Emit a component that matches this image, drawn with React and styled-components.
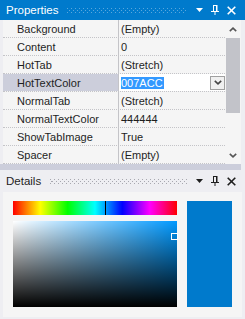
import React from 'react';
import styled, { createGlobalStyle } from 'styled-components';

const GlobalStyle = createGlobalStyle`
  html, body {
    margin: 0;
    padding: 0;
    background: #eeeef2;
  }
  body {
    font-family: "Liberation Sans", Arial, sans-serif;
    font-size: 11px;
    color: #1e1e1e;
  }
`;

const properties = [
  { name: 'Background', value: '(Empty)' },
  { name: 'Content', value: '0' },
  { name: 'HotTab', value: '(Stretch)' },
  { name: 'HotTextColor', value: '007ACC', editing: true },
  { name: 'NormalTab', value: '(Stretch)' },
  { name: 'NormalTextColor', value: '444444' },
  { name: 'ShowTabImage', value: 'True' },
  { name: 'Spacer', value: '(Empty)' },
];

function hexToHsv(hex) {
  const r = parseInt(hex.slice(0, 2), 16) / 255;
  const g = parseInt(hex.slice(2, 4), 16) / 255;
  const b = parseInt(hex.slice(4, 6), 16) / 255;
  const max = Math.max(r, g, b);
  const min = Math.min(r, g, b);
  const d = max - min;
  let h = 0;
  if (d) {
    if (max === r) h = ((g - b) / d) % 6;
    else if (max === g) h = (b - r) / d + 2;
    else h = (r - g) / d + 4;
    h *= 60;
    if (h < 0) h += 360;
  }
  return { h, s: max ? d / max : 0, v: max };
}

const Window = styled.div`
  width: 245px;
  height: 319px;
  display: flex;
  flex-direction: column;
  background: #eeeef2;
  overflow: hidden;
`;

const PaneHeader = styled.div`
  height: ${(p) => p.$height}px;
  flex: none;
  display: flex;
  align-items: center;
  padding: 0 6px 0 6px;
  background: ${(p) => (p.$active ? '#007acc' : '#eeeef2')};
  color: ${(p) => (p.$active ? '#ffffff' : '#1e1e1e')};
`;

const PaneTitle = styled.span`
  font-size: 11.5px;
  white-space: nowrap;
`;

const Grip = styled.div`
  flex: 1;
  display: flex;
  flex-direction: column;
  gap: 1px;
  margin: 1px 4px 0 9px;
`;

const GripRow = styled.div`
  height: 1px;
  background: repeating-linear-gradient(
    90deg,
    ${(p) => p.$color} 0 1px,
    transparent 1px 4px
  );
  background-position-x: ${(p) => p.$offset}px;
`;

const HeaderButton = styled.div`
  width: 16px;
  height: 16px;
  display: flex;
  align-items: center;
  justify-content: center;
  color: inherit;
`;

const GridArea = styled.div`
  height: 144px;
  flex: none;
  display: flex;
  padding: 0 4px 0 3px;
`;

const Rows = styled.div`
  flex: 1;
  background: #f5f5f5;
`;

const Row = styled.div`
  height: 18px;
  box-sizing: border-box;
  display: grid;
  grid-template-columns: 116px 1fr;
  border-bottom: 1px dotted #c4c4c8;
`;

const NameCell = styled.div`
  box-sizing: border-box;
  display: flex;
  align-items: center;
  padding-left: 14px;
  border-right: 1px solid #c4c4c8;
  background: ${(p) => (p.$selected ? '#cccedb' : 'transparent')};
  white-space: nowrap;
  overflow: hidden;
`;

const ValueCell = styled.div`
  display: flex;
  align-items: center;
  padding-left: 2px;
  background: ${(p) => (p.$editing ? '#ffffff' : 'transparent')};
  white-space: nowrap;
`;

const SelectedText = styled.span`
  background: #3399ff;
  color: #ffffff;
  padding-right: 1px;
`;

const DropButton = styled.div`
  margin-left: auto;
  width: 15px;
  height: 14px;
  box-sizing: border-box;
  border: 1px solid #a0a0a0;
  background: #f0f0f0;
  display: flex;
  align-items: center;
  justify-content: center;
  color: #444;
`;

const ScrollBar = styled.div`
  width: 16px;
  display: flex;
  flex-direction: column;
  background: #f5f5f5;
`;

const ScrollButton = styled.div`
  height: ${(p) => p.$height}px;
  display: flex;
  align-items: center;
  justify-content: center;
  color: #555;
`;

const Thumb = styled.div`
  height: 75px;
  margin: 0 1px;
  background: #c2c3c9;
`;

const Track = styled.div`
  flex: 1;
`;

const Splitter = styled.div`
  height: 6px;
  flex: none;
  margin-right: 4px;
  background: #cccedb;
`;

const DetailsBody = styled.div`
  flex: 1;
  margin: 0 3px 2px 3px;
  padding: 9px 10px 10px 10px;
  background: #f5f5f5;
  display: flex;
  gap: 10px;
`;

const PickerColumn = styled.div`
  width: 164px;
  display: flex;
  flex-direction: column;
  gap: 6px;
`;

const HueBar = styled.div`
  position: relative;
  height: 14px;
  background: linear-gradient(
    to right,
    #ff0000 0%,
    #ffff00 16.67%,
    #00ff00 33.33%,
    #00ffff 50%,
    #0000ff 66.67%,
    #ff00ff 83.33%,
    #ff0000 100%
  );
`;

const HueMarker = styled.div`
  position: absolute;
  top: 0;
  bottom: 0;
  width: 1px;
  background: #000;
`;

const SvBox = styled.div`
  position: relative;
  flex: 1;
  background: linear-gradient(to top, #000 0%, rgba(0, 0, 0, 0) 100%),
    linear-gradient(to right, #fff 0%, rgba(255, 255, 255, 0) 100%),
    ${(p) => `hsl(${p.$hue} 100% 50%)`};
`;

const SvMarker = styled.div`
  position: absolute;
  width: 7px;
  height: 7px;
  box-sizing: border-box;
  border: 1px solid #fff;
`;

const Swatch = styled.div`
  flex: 1;
  background: ${(p) => p.$color};
`;

function Chevron({ up }) {
  return (
    <svg width="8" height="5" viewBox="0 0 8 5">
      <path
        d={up ? 'M0.8 4.2 L4 1.2 L7.2 4.2' : 'M0.8 0.8 L4 3.8 L7.2 0.8'}
        fill="none"
        stroke="currentColor"
        strokeWidth="1.6"
      />
    </svg>
  );
}

function DropIcon() {
  return (
    <svg width="7" height="4" viewBox="0 0 7 4">
      <path d="M0 0 H7 L3.5 4 Z" fill="currentColor" />
    </svg>
  );
}

function PinIcon() {
  return (
    <svg width="8" height="10" viewBox="0 0 8 10">
      <path d="M2 0.5 H5.5 V6" fill="none" stroke="currentColor" strokeWidth="1" />
      <path d="M2.5 0 V6" stroke="currentColor" strokeWidth="1" />
      <rect x="5" y="0" width="1.5" height="6" fill="currentColor" />
      <rect x="0" y="6" width="8" height="1" fill="currentColor" />
      <rect x="3.5" y="7" width="1" height="3" fill="currentColor" />
    </svg>
  );
}

function CloseIcon() {
  return (
    <svg width="9" height="9" viewBox="0 0 9 9">
      <path d="M0.7 0.7 L8.3 8.3 M8.3 0.7 L0.7 8.3" stroke="currentColor" strokeWidth="1.6" />
    </svg>
  );
}

function Header({ title, active, height }) {
  const dot = active ? '#5aa7dc' : '#a8a8b0';
  return (
    <PaneHeader $active={active} $height={height}>
      <PaneTitle>{title}</PaneTitle>
      <Grip>
        <GripRow $color={dot} $offset={0} />
        <GripRow $color={dot} $offset={2} />
        <GripRow $color={dot} $offset={0} />
      </Grip>
      <HeaderButton>
        <DropIcon />
      </HeaderButton>
      <HeaderButton>
        <PinIcon />
      </HeaderButton>
      <HeaderButton>
        <CloseIcon />
      </HeaderButton>
    </PaneHeader>
  );
}

export default function App() {
  const current = properties.find((p) => p.editing).value;
  const { h, s, v } = hexToHsv(current);
  const pickerWidth = 164;
  const boxHeight = 86;

  return (
    <Window>
      <GlobalStyle />
      <Header title="Properties" active height={20} />
      <GridArea>
        <Rows>
          {properties.map((p) => (
            <Row key={p.name}>
              <NameCell $selected={p.editing}>{p.name}</NameCell>
              <ValueCell $editing={p.editing}>
                {p.editing ? (
                  <>
                    <SelectedText>{p.value}</SelectedText>
                    <DropButton>
                      <Chevron />
                    </DropButton>
                  </>
                ) : (
                  p.value
                )}
              </ValueCell>
            </Row>
          ))}
        </Rows>
        <ScrollBar>
          <ScrollButton $height={18}>
            <Chevron up />
          </ScrollButton>
          <Thumb />
          <Track />
          <ScrollButton $height={18}>
            <Chevron />
          </ScrollButton>
        </ScrollBar>
      </GridArea>
      <Splitter />
      <Header title="Details" height={22} />
      <DetailsBody>
        <PickerColumn>
          <HueBar>
            <HueMarker style={{ left: Math.round((h / 360) * pickerWidth) - 1 }} />
          </HueBar>
          <SvBox $hue={Math.round(h)}>
            <SvMarker
              style={{
                left: Math.round(s * pickerWidth) - 6,
                top: Math.round((1 - v) * boxHeight) - 5,
              }}
            />
          </SvBox>
        </PickerColumn>
        <Swatch $color={`#${current}`} />
      </DetailsBody>
    </Window>
  );
}
